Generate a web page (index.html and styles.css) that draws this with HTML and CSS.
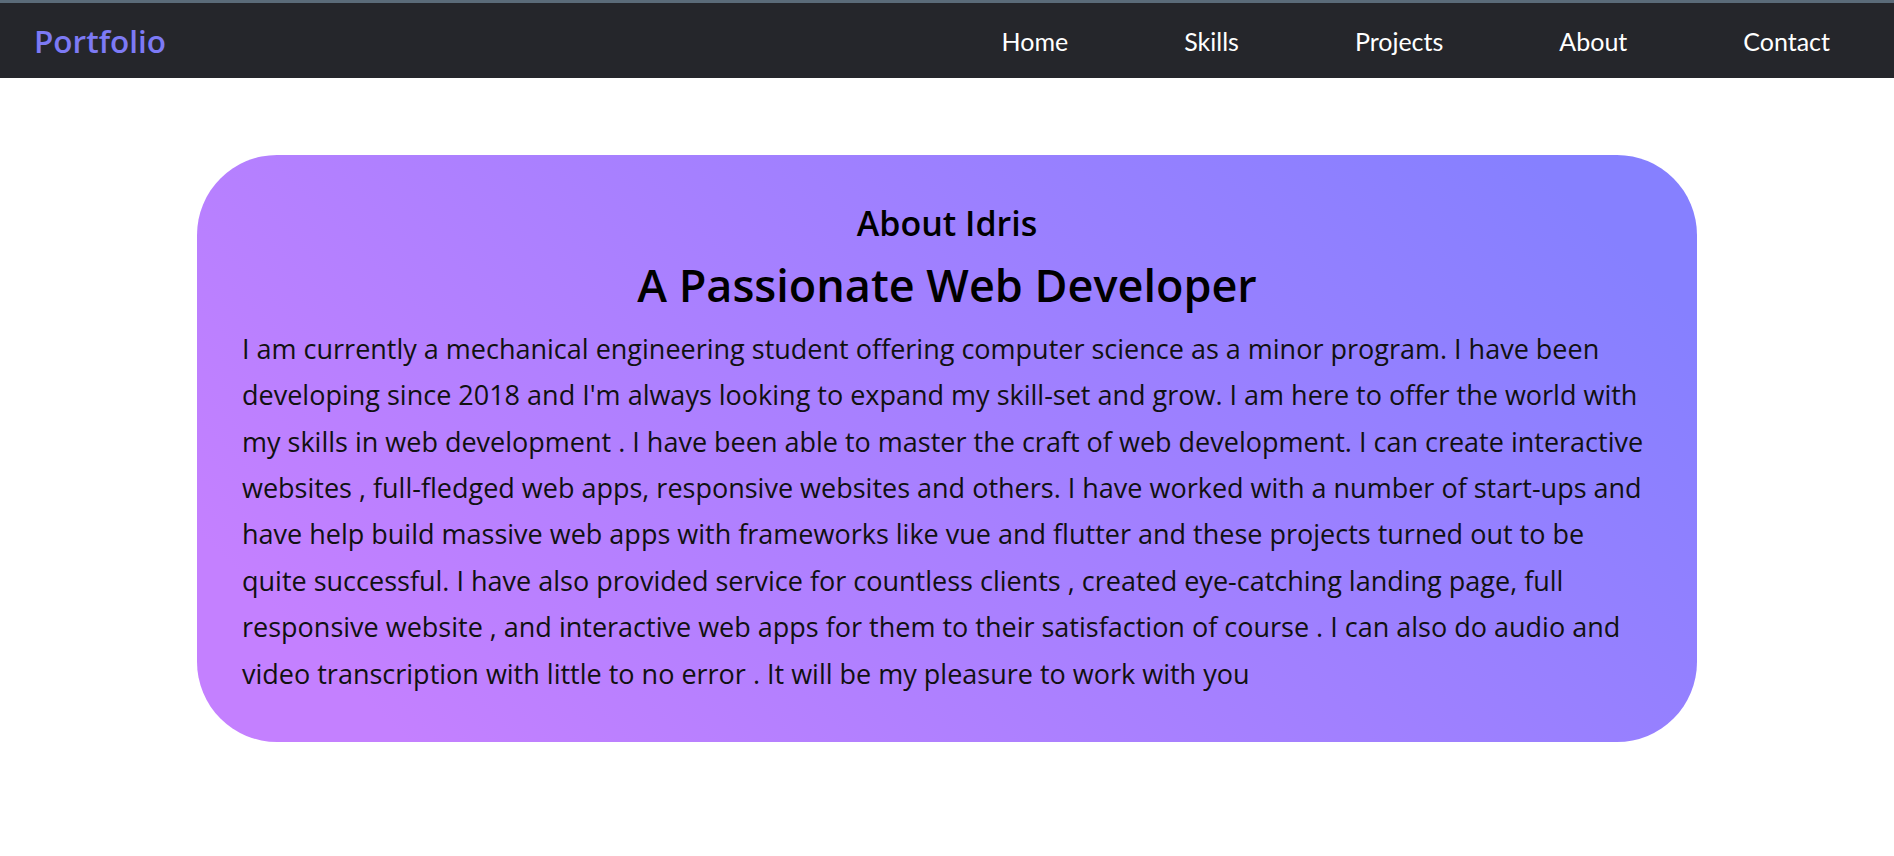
FILE: index.html
```html
<!DOCTYPE html>
<html lang="en">
<head>
<meta charset="utf-8">
<title>Portfolio</title>
<link rel="stylesheet" href="styles.css">
</head>
<body>
<header class="nav">
  <a class="logo" href="#">Portfolio</a>
  <ul class="links">
    <li><a href="#">Home</a></li>
    <li><a href="#">Skills</a></li>
    <li><a href="#">Projects</a></li>
    <li><a href="#">About</a></li>
    <li><a href="#">Contact</a></li>
  </ul>
</header>
<main class="page">
  <section class="about">
    <h3 class="about-title">About Idris</h3>
    <h1 class="about-heading">A Passionate Web Developer</h1>
    <p class="about-text">I am currently a mechanical engineering student offering computer science as a minor program. I have been<br>
developing since 2018 and I'm always looking to expand my skill-set and grow. I am here to offer the world with<br>
my skills in web development . I have been able to master the craft of web development. I can create interactive<br>
websites , full-fledged web apps, responsive websites and others. I have worked with a number of start-ups and<br>
have help build massive web apps with frameworks like vue and flutter and these projects turned out to be<br>
quite successful. I have also provided service for countless clients , created eye-catching landing page, full<br>
responsive website , and interactive web apps for them to their satisfaction of course . I can also do audio and<br>
video transcription with little to no error . It will be my pleasure to work with you</p>
  </section>
</main>
</body>
</html>
```
FILE: styles.css
```css
* { box-sizing: border-box; }
html, body { margin: 0; padding: 0; background: #ffffff; }
body { font-family: "Open Sans", "Noto Sans", sans-serif; }

.nav {
  height: 78px;
  border-top: 3px solid #5b6b79;
  background: #25262b;
  display: flex;
  align-items: center;
  justify-content: space-between;
  padding: 0 64px 0 34px;
}
.logo {
  font-family: "Open Sans", sans-serif;
  font-size: 31.5px;
  font-weight: 600;
  color: #7d7af5;
  text-decoration: none;
}
.links {
  list-style: none;
  margin: 0;
  padding: 0;
  display: flex;
  gap: 116px;
}
.links a {
  font-family: Lato, sans-serif;
  font-size: 25px;
  color: #ffffff;
  text-decoration: none;
}

.page { padding-top: 77px; }
.about {
  width: 1500px;
  margin: 0 auto;
  border-radius: 80px;
  background: linear-gradient(45deg, #c480ff 10%, #8680ff 92%);
  padding: 48px 45px 45px;
  color: #000;
  text-align: center;
}
.about-title {
  margin: 0;
  font-size: 34px;
  font-weight: 600;
  line-height: 1.2;
}
.about-heading {
  margin: 14px 0 0;
  font-size: 45px;
  font-weight: 600;
  line-height: 1.2;
}
.about-text {
  margin: 14px 0 0;
  text-align: left;
  font-size: 27px;
  line-height: 46.4px;
  color: #111;
  white-space: nowrap;
}
```
